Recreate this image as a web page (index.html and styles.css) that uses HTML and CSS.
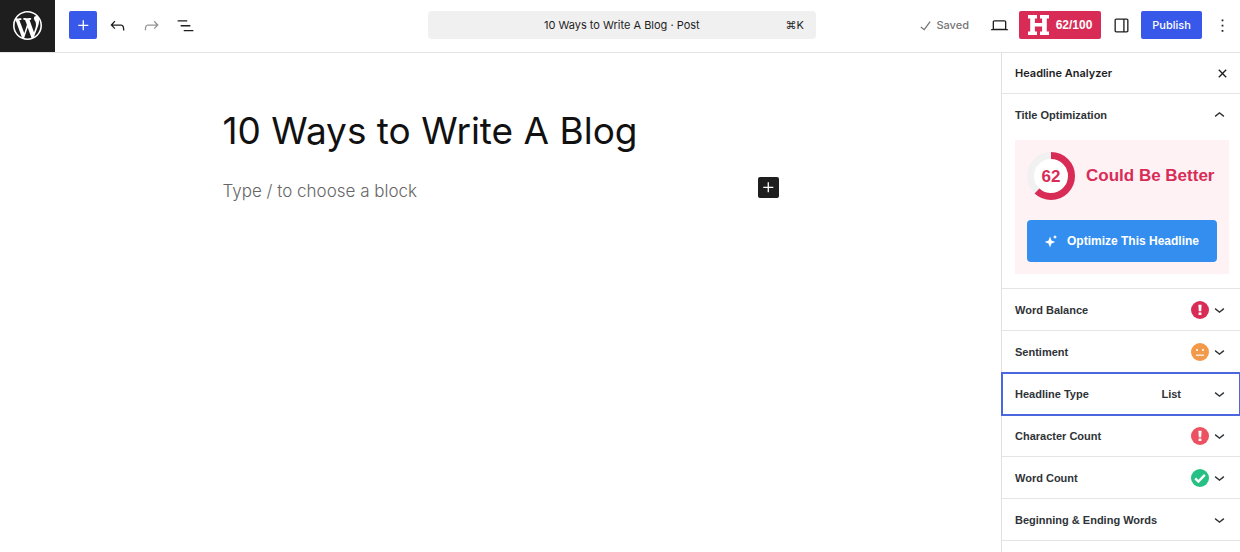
FILE: index.html
```html
<!DOCTYPE html>
<html lang="en">
<head>
<meta charset="utf-8">
<title>10 Ways to Write A Blog</title>
<link rel="stylesheet" href="styles.css">
</head>
<body>
<svg class="sprite" aria-hidden="true">
  <symbol id="plus" viewBox="0 0 24 24"><path d="M11 12.5V17.5H12.5V12.5H17.5V11H12.5V6H11V11H6V12.5H11Z"/></symbol>
  <symbol id="down" viewBox="0 0 24 24"><path d="M17.5 11.6L12 16l-5.500-4.400.9-1.200L12 14l4.500-3.600 1 1.200z"/></symbol>
  <symbol id="alert" viewBox="0 0 18 18"><circle cx="9" cy="9" r="9"/><path fill="#fff" d="M7.400 3.800h3.200l-.4 6.400H7.800zM7.600 11.400h2.800v2.700H7.600z"/></symbol>
</svg>
<div class="app">
  <header class="topbar">
    <div class="tools">
      <a class="logo" href="#" aria-label="View posts"><svg viewBox="0 0 20 20"><path d="M20 10c0-5.510-4.490-10-10-10C4.480 0 0 4.490 0 10c0 5.520 4.480 10 10 10 5.510 0 10-4.480 10-10zM7.780 15.370L4.370 6.220c.55-.02 1.170-.08 1.170-.08.5-.06.44-1.130-.06-1.110 0 0-1.450.11-2.370.11-.18 0-.37 0-.58-.01C4.120 2.690 6.870 1.110 10 1.110c2.330 0 4.450.87 6.050 2.340-.68-.11-1.650.39-1.650 1.580 0 .74.45 1.360.9 2.100.35.61.55 1.360.55 2.460 0 1.490-1.400 5-1.400 5l-3.030-8.370c.54-.02.82-.17.82-.17.5-.05.44-1.250-.06-1.220 0 0-1.440.12-2.380.12-.87 0-2.330-.12-2.330-.12-.5-.03-.56 1.200-.06 1.220l.92.08 1.260 3.410zM17.410 10c.24-.64.74-1.870.43-4.250.7 1.290 1.050 2.710 1.050 4.250 0 3.290-1.730 6.240-4.400 7.780.97-2.590 1.940-5.200 2.920-7.780zM6.100 18.090C3.120 16.650 1.110 13.530 1.110 10c0-1.300.23-2.480.72-3.590C3.250 10.300 4.670 14.200 6.100 18.090zm4.030-6.630l2.580 6.980c-.86.29-1.760.45-2.710.45-.79 0-1.570-.11-2.290-.33.81-2.380 1.620-4.740 2.420-7.100z"/></svg></a>
      <button class="tool primary" aria-label="Toggle block inserter"><svg class="icon"><use href="#plus"/></svg></button>
      <button class="tool" aria-label="Undo"><svg class="icon" viewBox="0 0 24 24"><path d="M18.300 11.700c-.6-.6-1.400-.9-2.300-.9H6.700l2.900-3.300-1.100-1-4.500 5L8.500 16l1-1-2.700-2.700H16c.5 0 .9.2 1.300.5 1 1 1 3.400 1 4.500v.3h1.500v-.2c0-1.500 0-4.300-1.500-5.700z"/></svg></button>
      <button class="tool muted" aria-label="Redo"><svg class="icon" viewBox="0 0 24 24"><path d="M15.600 6.500l-1.100 1 2.900 3.300H8c-.9 0-1.700.3-2.300.9-1.400 1.500-1.400 4.200-1.400 5.600v.2h1.500v-.3c0-1.100 0-3.500 1-4.500.3-.3.7-.5 1.300-.5h9.200L14.500 15l1.100 1.100 4.600-4.600-4.600-5z"/></svg></button>
      <button class="tool" aria-label="Document overview"><svg class="icon" viewBox="0 0 24 24"><path d="M3 6h11v1.500H3V6Zm3.500 5.500h11V13h-11v-1.500ZM21 17H10v1.500h11V17Z"/></svg></button>
    </div>
    <button class="docbar"><span class="docname">10 Ways to Write A Blog · Post</span><span>⌘K</span></button>
    <div class="actions">
      <span class="saved"><svg class="icon" viewBox="0 0 24 24"><path d="M16.700 7.100l-6.300 8.500-3.300-2.500-.9 1.200 4.500 3.400L17.900 8z"/></svg>Saved</span>
      <button class="tool" aria-label="Preview"><svg class="icon" viewBox="0 0 24 24"><path d="M20.500 16h-.7V8c0-1.100-.9-2-2-2H6.200c-1.100 0-2 .9-2 2v8h-.7c-.8 0-1.500.7-1.500 1.500h20c0-.8-.7-1.500-1.500-1.500zM5.700 8c0-.3.2-.5.5-.5h11.600c.3 0 .5.2.5.5v7.600H5.700V8z"/></svg></button>
      <button class="score"><svg class="mark" viewBox="0 0 21 20" aria-hidden="true"><path d="M0 0h9v3.500H6.900v4.600h7.200V3.500H12V0h9v3.500h-2.200v13H21V20h-9v-3.500h2.100v-4.900H6.900v4.900H9V20H0v-3.500h2.200v-13H0z"/></svg>62/100</button>
      <button class="tool" aria-label="Settings"><svg class="icon" viewBox="0 0 24 24"><path d="M18 4H6c-1.100 0-2 .9-2 2v12c0 1.100.9 2 2 2h12c1.100 0 2-.9 2-2V6c0-1.100-.9-2-2-2zm-4 14.500H6c-.3 0-.5-.2-.5-.5V6c0-.3.2-.5.5-.5h8v13zm4.500-.5c0 .3-.2.5-.5.5h-2.500v-13H18c.3 0 .5.2.5.5v12z"/></svg></button>
      <button class="publish">Publish</button>
      <button class="tool" aria-label="Options"><svg class="icon" viewBox="0 0 24 24"><path d="M13 19h-2v-2h2v2zm0-6h-2v-2h2v2zm0-6h-2V5h2v2z"/></svg></button>
    </div>
  </header>
  <div class="workspace">
    <main class="editor">
      <div class="content">
        <h1 class="title">10 Ways to Write A Blog</h1>
        <div class="block">
          <p class="prompt">Type / to choose a block</p>
          <button class="add" aria-label="Add block"><svg class="icon"><use href="#plus"/></svg></button>
        </div>
      </div>
    </main>
    <aside class="sidebar">
      <div class="side-head"><h2 class="side-title">Headline Analyzer</h2><button class="close" aria-label="Close"><svg class="icon" viewBox="0 0 24 24"><path d="M12 13.060l3.712 3.713 1.061-1.060L13.061 12l3.712-3.712-1.060-1.060L12 10.938 8.288 7.227l-1.061 1.060L10.939 12l-3.712 3.712 1.060 1.061L12 13.061z"/></svg></button></div>
      <section class="optimization">
        <button class="row open" aria-expanded="true"><span class="label">Title Optimization</span><svg class="icon" viewBox="0 0 24 24"><path d="M6.500 12.400L12 8l5.500 4.400-.9 1.200L12 10l-4.500 3.600-1-1.200z"/></svg></button>
        <div class="card">
          <div class="result">
            <svg class="ring" viewBox="0 0 48 48" role="img" aria-label="62"><circle class="disc" cx="24" cy="24" r="20"/><circle class="track" cx="24" cy="24" r="20.500"/><circle class="value" cx="24" cy="24" r="20.500" pathLength="100" stroke-dasharray="62 38" transform="rotate(-90 24 24)"/><text x="24" y="30">62</text></svg>
            <strong class="verdict">Could Be Better</strong>
          </div>
          <button class="optimize"><svg class="spark" viewBox="0 0 12 12" aria-hidden="true"><path d="M5 1.500L6.500 5.500 10.300 7 6.500 8.500 5 12.500 3.500 8.500 -.3 7 3.500 5.500zM10 0l.7 1.300 1.300.7-1.300.7L10 4l-.7-1.300L8 2l1.300-.7z"/></svg>Optimize This Headline</button>
        </div>
      </section>
      <button class="row"><span class="label">Word Balance</span><svg class="badge red"><use href="#alert"/></svg><svg class="icon"><use href="#down"/></svg></button>
      <button class="row"><span class="label">Sentiment</span><svg class="badge orange" viewBox="0 0 18 18"><circle cx="9" cy="9" r="9"/><path fill="#fff" fill-opacity=".8" d="M5 6h2v2H5zM11 6h2v2h-2zM5 11.500h8V13H5z"/></svg><svg class="icon"><use href="#down"/></svg></button>
      <button class="row selected"><span class="label">Headline Type</span><span class="kind">List</span><svg class="icon"><use href="#down"/></svg></button>
      <button class="row"><span class="label">Character Count</span><svg class="badge coral"><use href="#alert"/></svg><svg class="icon"><use href="#down"/></svg></button>
      <button class="row"><span class="label">Word Count</span><svg class="badge green" viewBox="0 0 18 18"><circle cx="9" cy="9" r="9"/><path fill="none" stroke="#fff" stroke-width="2.400" d="M4.200 9.300l3.200 3.200 6.400-6.600"/></svg><svg class="icon"><use href="#down"/></svg></button>
      <button class="row"><span class="label">Beginning &amp; Ending Words</span><svg class="icon"><use href="#down"/></svg></button>
    </aside>
  </div>
</div>
</body>
</html>
```
FILE: styles.css
```css
* { box-sizing: border-box; }
body { margin: 0; background: #fff; color: #1e1e1e; font: 11px/16px Inter, sans-serif; }
h1, h2, p { margin: 0; }
button { margin: 0; padding: 0; border: 0; background: none; color: inherit; font: inherit; cursor: pointer; }
svg { display: block; flex: none; fill: currentColor; }
.sprite { position: absolute; width: 0; height: 0; }
.icon { width: 21px; height: 21px; }
.app { display: flex; flex-direction: column; min-height: 100vh; }

.topbar { display: grid; grid-template-columns: 1fr 392px 1fr; align-items: center; padding-bottom: 2px; border-bottom: 1px solid #e4e4e4; }
.tools { display: flex; align-items: center; gap: 6px; }
.logo { display: grid; place-items: center; width: 55px; height: 52px; margin: 0 8px -2px 0; padding-bottom: 2px; background: #1e1e1e; color: #fff; }
.logo svg { width: 29px; height: 29px; }
.tool { display: grid; place-items: center; width: 28px; height: 28px; border-radius: 2px; }
.primary { background: #3858e9; color: #fff; }
.muted { color: #949494; }
.docbar { display: flex; align-items: center; height: 28px; margin-left: 4px; padding: 0 12px; border-radius: 4px; background: #f0f0f0; }
.docname { flex: 1; padding-left: 18px; }
.actions { display: flex; align-items: center; justify-content: flex-end; gap: 6px; padding-right: 4px; }
.saved { display: flex; align-items: center; margin-right: 10px; color: #757575; font-weight: 500; }
.score, .publish { display: flex; align-items: center; justify-content: center; height: 28px; border-radius: 2px; color: #fff; }
.score { gap: 7px; width: 82px; background: #d82c57; font: bold 12px/16px "Liberation Sans", Arial, sans-serif; }
.mark { width: 21px; height: 20px; }
.publish { width: 61px; background: #3858e9; font-weight: 500; }

.workspace { display: flex; flex: 1; }
.editor { flex: 1; padding: 52px 24px; }
.content { max-width: 556px; margin: 0 auto; }
.title { font-size: 37px; line-height: 52px; font-weight: 400; color: #111; }
.block { display: flex; align-items: flex-start; justify-content: space-between; margin-top: 20px; }
.prompt { font-size: 17px; line-height: 28px; font-weight: 300; color: #666; }
.add { display: grid; place-items: center; width: 21px; height: 21px; border-radius: 2px; background: #1e1e1e; color: #fff; }

.sidebar { width: 239px; border-left: 1px solid #e0e0e0; }
.side-head { display: flex; align-items: center; justify-content: space-between; height: 41px; padding: 0 7px 0 13px; border-bottom: 1px solid #e4e4e4; }
.side-title { font-size: 11px; line-height: 16px; font-weight: 600; }
.optimization { padding-bottom: 14px; border-bottom: 1px solid #e4e4e4; }
.row { display: flex; align-items: center; width: 100%; height: 42px; padding: 0 10px 0 13px; border-bottom: 1px solid #e4e4e4; font: bold 11px/16px "Liberation Sans", Arial, sans-serif; color: #2f3337; text-align: left; }
.row.open { height: 46px; padding-bottom: 4px; border: 0; }
.label { flex: 1; }
.kind { margin-right: 28px; }
.selected { border-color: transparent; outline: 2px solid #4a67df; outline-offset: -1px; }
.badge { width: 18px; height: 18px; }
.red { color: #d82c57; }
.orange { color: #f2994a; }
.coral { color: #eb5160; }
.green { color: #27c084; }
.card { margin: 0 11px 0 13px; padding: 12px; background: #fff2f5; }
.result { display: flex; align-items: center; gap: 11px; color: #d82c57; }
.ring { width: 48px; height: 48px; }
.disc { fill: #fff; }
.track, .value { fill: none; stroke: #f1f1f1; stroke-width: 7px; }
.value { stroke: #d82c57; }
.ring text { font: bold 17px "Liberation Sans", Arial, sans-serif; text-anchor: middle; }
.verdict { font: bold 17px/24px "Liberation Sans", Arial, sans-serif; white-space: nowrap; }
.optimize { display: flex; align-items: center; justify-content: center; gap: 10px; width: 100%; height: 42px; margin-top: 20px; border-radius: 4px; background: #338eef; color: #fff; font: bold 12px/16px "Liberation Sans", Arial, sans-serif; }
.spark { width: 12px; height: 12px; overflow: visible; }
```
